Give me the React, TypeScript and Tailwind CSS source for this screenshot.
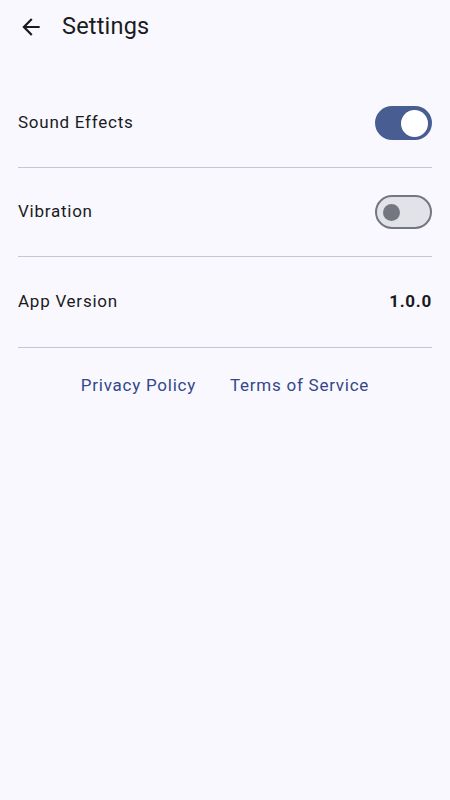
import React, { useState } from 'react';

const ArrowBack = () => (
  <svg width="26" height="26" viewBox="0 0 24 24" fill="#1a1b21">
    <path d="M20 11H7.83l5.59-5.59L12 4l-8 8 8 8 1.41-1.41L7.83 13H20v-2z" />
  </svg>
);

const Switch = ({ on, onToggle }: { on: boolean; onToggle: () => void }) => (
  <button
    onClick={onToggle}
    className={`flex items-center w-[57px] h-[34px] rounded-full box-border ${
      on ? 'bg-[#485d92] justify-end pr-[4px]' : 'bg-[#e2e2e9] border-2 border-[#757780] pl-[6px]'
    }`}
  >
    {on ? (
      <span className="block w-[27px] h-[27px] rounded-full bg-white" />
    ) : (
      <span className="block w-[17px] h-[17px] rounded-full bg-[#757780]" />
    )}
  </button>
);

export default function App() {
  const [sound, setSound] = useState(true);
  const [vibration, setVibration] = useState(false);

  return (
    <div className="w-[450px] h-[800px] bg-[#f9f8ff] text-[#1a1b21]" style={{ fontFamily: 'Roboto, "Noto Sans", sans-serif' }}>
      {/* header */}
      <div className="h-[54px] flex items-center pl-[18px]">
        <ArrowBack />
        <span className="ml-[18px] text-[23.5px] tracking-[0.2px] leading-none">Settings</span>
      </div>

      <div className="pt-[25px] px-[18px]">
        <div className="h-[88px] flex items-center justify-between">
          <span className="text-[17px] tracking-[0.75px]">Sound Effects</span>
          <Switch on={sound} onToggle={() => setSound(!sound)} />
        </div>
        <div className="h-px bg-[#c5c6d0]" />

        <div className="h-[88px] flex items-center justify-between">
          <span className="text-[17px] tracking-[0.75px]">Vibration</span>
          <Switch on={vibration} onToggle={() => setVibration(!vibration)} />
        </div>
        <div className="h-px bg-[#c5c6d0]" />

        <div className="h-[90px] flex items-center justify-between">
          <span className="text-[17px] tracking-[0.75px]">App Version</span>
          <span className="text-[17px] tracking-[0.75px] font-bold">1.0.0</span>
        </div>
        <div className="h-px bg-[#c5c6d0]" />

        <div className="flex justify-center gap-[34px] pt-[25px]">
          <span className="text-[17px] tracking-[0.75px] text-[#34478a]">Privacy Policy</span>
          <span className="text-[17px] tracking-[0.75px] text-[#34478a]">Terms of Service</span>
        </div>
      </div>
    </div>
  );
}
